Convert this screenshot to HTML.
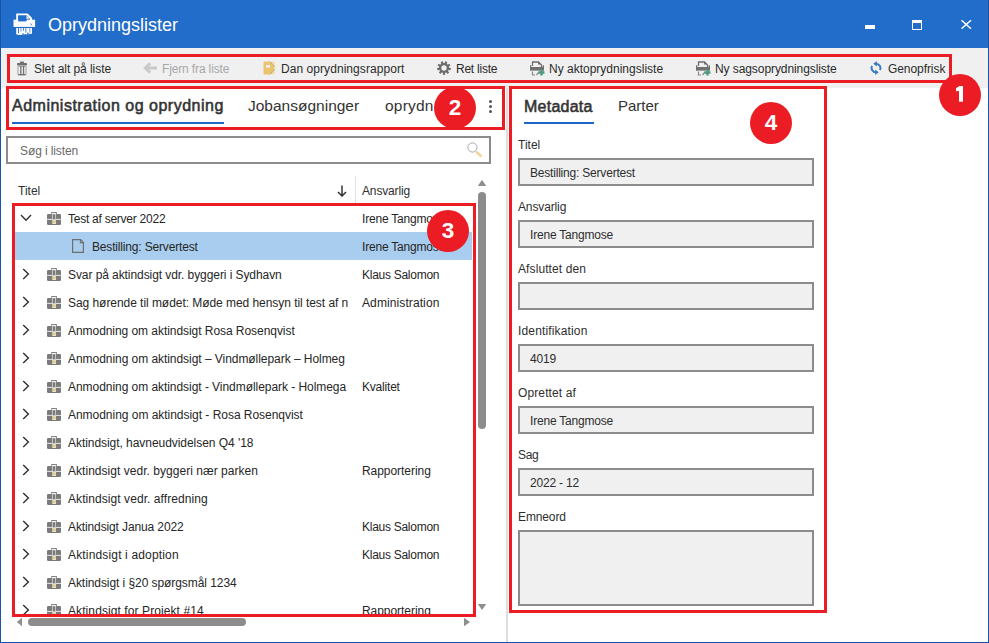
<!DOCTYPE html>
<html><head><meta charset="utf-8">
<style>
*{box-sizing:border-box;margin:0;padding:0}
html,body{width:989px;height:643px;overflow:hidden;background:#fff}
body{position:relative;font-family:"Liberation Sans",sans-serif;color:#2e2e2e}
.a{position:absolute}
.t{position:absolute;white-space:pre;line-height:1}
#title{left:0;top:0;width:989px;height:48px;background:#226dca}
#bl{left:0;top:0;width:1px;height:643px;background:#1753a6}
#br{left:988px;top:0;width:1px;height:643px;background:#1753a6}
#bb{left:0;top:642px;width:989px;height:1px;background:#1753a6}
#tb{left:1px;top:48px;width:987px;height:40px;background:#f0f0f0}
.tbt{font-size:12px;top:63px;color:#2b2b2b}
.red{position:absolute;border:3px solid #ec1c24}
.circ{position:absolute;width:42px;height:42px;border-radius:50%;background:#ec1c24;color:#fff;font-weight:bold;font-size:22.5px;text-align:center;line-height:42px}
.row{position:absolute;left:0;width:472px;height:28px}
.sel{background:linear-gradient(to right,#fff 0,#fff 13px,#a9cdee 13px)}
.rt{position:absolute;font-size:12px;letter-spacing:-0.1px;white-space:pre;line-height:16px;top:7px;color:#262626}
.lbl{position:absolute;left:518px;font-size:12px;letter-spacing:-0.1px;white-space:pre;line-height:1}
.inp{position:absolute;left:518px;width:296px;height:28px;background:#f0f0f0;border:2px solid #8c8c8c}
.inp span{position:absolute;left:10px;top:7px;font-size:12px;letter-spacing:-0.2px;white-space:pre;line-height:1}
</style></head><body>
<div id="title" class="a"></div>
<div class="t" style="left:48px;top:16px;font-size:18px;color:#fff">Oprydningslister</div>
<div id="tb" class="a"></div>

<!-- left panel -->
<div class="a" style="left:506px;top:88px;width:2px;height:554px;background:#dedede"></div>

<div class="t" style="left:12px;top:98px;font-size:16px;letter-spacing:0.5px;-webkit-text-stroke:0.55px #333;color:#333">Administration og oprydning</div>
<div class="a" style="left:12px;top:122px;width:212px;height:2px;background:#1e66c8"></div>
<div class="t" style="left:248px;top:98px;font-size:15.5px;color:#333">Jobansøgninger</div>
<div class="a" style="left:385px;top:94px;width:49px;height:24px;overflow:hidden"><div class="t" style="left:0;top:4px;font-size:15.5px;letter-spacing:0.2px;color:#333">oprydning</div></div>

<div class="a" style="left:6px;top:136px;width:485px;height:28px;border:2px solid #8c8c8c;background:#fff"></div>
<div class="t" style="left:20px;top:145px;font-size:12px;letter-spacing:-0.1px;color:#6a6a6a">Søg i listen</div>

<div class="t" style="left:18px;top:185px;font-size:12px">Titel</div>
<div class="a" style="left:355px;top:176px;width:1px;height:28px;background:#e2e2e2"></div>
<div class="t" style="left:362px;top:185px;font-size:12px;letter-spacing:-0.15px">Ansvarlig</div>

<div id="list" class="a" style="left:0;top:204px;width:476px;height:413px;overflow:hidden">
<div class="row" style="top:0px"><svg class="a" style="left:20px;top:10px" width="12" height="8" viewBox="0 0 12 8"><path d="M1,1 L6,6.2 L11,1" fill="none" stroke="#303030" stroke-width="1.4"/></svg><svg class="a" style="left:47px;top:8px" width="15" height="14" viewBox="0 0 15 14"><rect x="0" y="2" width="14" height="11" rx="1.2" fill="#7b7b7b"/><rect x="0" y="6.9" width="14" height="1.1" fill="#dcdcdc"/><rect x="4.7" y="0.5" width="4.7" height="2" fill="#f4f4f4" stroke="#858585" stroke-width="1"/><rect x="5.2" y="2" width="3.8" height="10" fill="#d6d6d6"/><rect x="6" y="2.3" width="2.2" height="5" fill="#7b7b7b"/><rect x="6" y="7.8" width="2.2" height="3.8" fill="#eef0f4"/><circle cx="7.1" cy="9.8" r="1.3" fill="#f2c252"/></svg><div class="rt" style="left:68px;width:283px;overflow:hidden;letter-spacing:-0.250px">Test af server 2022</div><div class="rt" style="left:362px;letter-spacing:-0.200px">Irene Tangmose</div></div>
<div class="row sel" style="top:28px"><svg class="a" style="left:72px;top:7px" width="13" height="15" viewBox="0 0 13 15"><path d="M0.6,0.6 H8.6 L11.4,3.4 V13.4 H0.6 Z" fill="none" stroke="#6e6e6e" stroke-width="1.2"/><path d="M8.4,0.6 V3.6 H11.4" fill="none" stroke="#6e6e6e" stroke-width="1.1"/></svg><div class="rt" style="left:92px;width:259px;overflow:hidden;letter-spacing:-0.170px">Bestilling: Servertest</div><div class="rt" style="left:362px;letter-spacing:-0.200px">Irene Tangmose</div></div>
<div class="row" style="top:56px"><svg class="a" style="left:22px;top:8px" width="8" height="12" viewBox="0 0 8 12"><path d="M1.2,1 L6.4,6 L1.2,11" fill="none" stroke="#303030" stroke-width="1.4"/></svg><svg class="a" style="left:47px;top:8px" width="15" height="14" viewBox="0 0 15 14"><rect x="0" y="2" width="14" height="11" rx="1.2" fill="#7b7b7b"/><rect x="0" y="6.9" width="14" height="1.1" fill="#dcdcdc"/><rect x="4.7" y="0.5" width="4.7" height="2" fill="#f4f4f4" stroke="#858585" stroke-width="1"/><rect x="5.2" y="2" width="3.8" height="10" fill="#d6d6d6"/><rect x="6" y="2.3" width="2.2" height="5" fill="#7b7b7b"/><rect x="6" y="7.8" width="2.2" height="3.8" fill="#eef0f4"/><circle cx="7.1" cy="9.8" r="1.3" fill="#f2c252"/></svg><div class="rt" style="left:68px;width:283px;overflow:hidden;letter-spacing:-0.076px">Svar på aktindsigt vdr. byggeri i Sydhavn</div><div class="rt" style="left:362px;letter-spacing:-0.270px">Klaus Salomon</div></div>
<div class="row" style="top:84px"><svg class="a" style="left:22px;top:8px" width="8" height="12" viewBox="0 0 8 12"><path d="M1.2,1 L6.4,6 L1.2,11" fill="none" stroke="#303030" stroke-width="1.4"/></svg><svg class="a" style="left:47px;top:8px" width="15" height="14" viewBox="0 0 15 14"><rect x="0" y="2" width="14" height="11" rx="1.2" fill="#7b7b7b"/><rect x="0" y="6.9" width="14" height="1.1" fill="#dcdcdc"/><rect x="4.7" y="0.5" width="4.7" height="2" fill="#f4f4f4" stroke="#858585" stroke-width="1"/><rect x="5.2" y="2" width="3.8" height="10" fill="#d6d6d6"/><rect x="6" y="2.3" width="2.2" height="5" fill="#7b7b7b"/><rect x="6" y="7.8" width="2.2" height="3.8" fill="#eef0f4"/><circle cx="7.1" cy="9.8" r="1.3" fill="#f2c252"/></svg><div class="rt" style="left:68px;width:283px;overflow:hidden;letter-spacing:-0.050px">Sag hørende til mødet: Møde med hensyn til test af n</div><div class="rt" style="left:362px;letter-spacing:0.100px">Administration</div></div>
<div class="row" style="top:112px"><svg class="a" style="left:22px;top:8px" width="8" height="12" viewBox="0 0 8 12"><path d="M1.2,1 L6.4,6 L1.2,11" fill="none" stroke="#303030" stroke-width="1.4"/></svg><svg class="a" style="left:47px;top:8px" width="15" height="14" viewBox="0 0 15 14"><rect x="0" y="2" width="14" height="11" rx="1.2" fill="#7b7b7b"/><rect x="0" y="6.9" width="14" height="1.1" fill="#dcdcdc"/><rect x="4.7" y="0.5" width="4.7" height="2" fill="#f4f4f4" stroke="#858585" stroke-width="1"/><rect x="5.2" y="2" width="3.8" height="10" fill="#d6d6d6"/><rect x="6" y="2.3" width="2.2" height="5" fill="#7b7b7b"/><rect x="6" y="7.8" width="2.2" height="3.8" fill="#eef0f4"/><circle cx="7.1" cy="9.8" r="1.3" fill="#f2c252"/></svg><div class="rt" style="left:68px;width:283px;overflow:hidden;letter-spacing:-0.054px">Anmodning om aktindsigt Rosa Rosenqvist</div></div>
<div class="row" style="top:140px"><svg class="a" style="left:22px;top:8px" width="8" height="12" viewBox="0 0 8 12"><path d="M1.2,1 L6.4,6 L1.2,11" fill="none" stroke="#303030" stroke-width="1.4"/></svg><svg class="a" style="left:47px;top:8px" width="15" height="14" viewBox="0 0 15 14"><rect x="0" y="2" width="14" height="11" rx="1.2" fill="#7b7b7b"/><rect x="0" y="6.9" width="14" height="1.1" fill="#dcdcdc"/><rect x="4.7" y="0.5" width="4.7" height="2" fill="#f4f4f4" stroke="#858585" stroke-width="1"/><rect x="5.2" y="2" width="3.8" height="10" fill="#d6d6d6"/><rect x="6" y="2.3" width="2.2" height="5" fill="#7b7b7b"/><rect x="6" y="7.8" width="2.2" height="3.8" fill="#eef0f4"/><circle cx="7.1" cy="9.8" r="1.3" fill="#f2c252"/></svg><div class="rt" style="left:68px;width:283px;overflow:hidden;letter-spacing:-0.050px">Anmodning om aktindsigt – Vindmøllepark – Holmeg</div></div>
<div class="row" style="top:168px"><svg class="a" style="left:22px;top:8px" width="8" height="12" viewBox="0 0 8 12"><path d="M1.2,1 L6.4,6 L1.2,11" fill="none" stroke="#303030" stroke-width="1.4"/></svg><svg class="a" style="left:47px;top:8px" width="15" height="14" viewBox="0 0 15 14"><rect x="0" y="2" width="14" height="11" rx="1.2" fill="#7b7b7b"/><rect x="0" y="6.9" width="14" height="1.1" fill="#dcdcdc"/><rect x="4.7" y="0.5" width="4.7" height="2" fill="#f4f4f4" stroke="#858585" stroke-width="1"/><rect x="5.2" y="2" width="3.8" height="10" fill="#d6d6d6"/><rect x="6" y="2.3" width="2.2" height="5" fill="#7b7b7b"/><rect x="6" y="7.8" width="2.2" height="3.8" fill="#eef0f4"/><circle cx="7.1" cy="9.8" r="1.3" fill="#f2c252"/></svg><div class="rt" style="left:68px;width:283px;overflow:hidden;letter-spacing:-0.050px">Anmodning om aktindsigt - Vindmøllepark - Holmega</div><div class="rt" style="left:362px;letter-spacing:-0.200px">Kvalitet</div></div>
<div class="row" style="top:196px"><svg class="a" style="left:22px;top:8px" width="8" height="12" viewBox="0 0 8 12"><path d="M1.2,1 L6.4,6 L1.2,11" fill="none" stroke="#303030" stroke-width="1.4"/></svg><svg class="a" style="left:47px;top:8px" width="15" height="14" viewBox="0 0 15 14"><rect x="0" y="2" width="14" height="11" rx="1.2" fill="#7b7b7b"/><rect x="0" y="6.9" width="14" height="1.1" fill="#dcdcdc"/><rect x="4.7" y="0.5" width="4.7" height="2" fill="#f4f4f4" stroke="#858585" stroke-width="1"/><rect x="5.2" y="2" width="3.8" height="10" fill="#d6d6d6"/><rect x="6" y="2.3" width="2.2" height="5" fill="#7b7b7b"/><rect x="6" y="7.8" width="2.2" height="3.8" fill="#eef0f4"/><circle cx="7.1" cy="9.8" r="1.3" fill="#f2c252"/></svg><div class="rt" style="left:68px;width:283px;overflow:hidden;letter-spacing:-0.030px">Anmodning om aktindsigt - Rosa Rosenqvist</div></div>
<div class="row" style="top:224px"><svg class="a" style="left:22px;top:8px" width="8" height="12" viewBox="0 0 8 12"><path d="M1.2,1 L6.4,6 L1.2,11" fill="none" stroke="#303030" stroke-width="1.4"/></svg><svg class="a" style="left:47px;top:8px" width="15" height="14" viewBox="0 0 15 14"><rect x="0" y="2" width="14" height="11" rx="1.2" fill="#7b7b7b"/><rect x="0" y="6.9" width="14" height="1.1" fill="#dcdcdc"/><rect x="4.7" y="0.5" width="4.7" height="2" fill="#f4f4f4" stroke="#858585" stroke-width="1"/><rect x="5.2" y="2" width="3.8" height="10" fill="#d6d6d6"/><rect x="6" y="2.3" width="2.2" height="5" fill="#7b7b7b"/><rect x="6" y="7.8" width="2.2" height="3.8" fill="#eef0f4"/><circle cx="7.1" cy="9.8" r="1.3" fill="#f2c252"/></svg><div class="rt" style="left:68px;width:283px;overflow:hidden;letter-spacing:-0.050px">Aktindsigt, havneudvidelsen Q4 '18</div></div>
<div class="row" style="top:252px"><svg class="a" style="left:22px;top:8px" width="8" height="12" viewBox="0 0 8 12"><path d="M1.2,1 L6.4,6 L1.2,11" fill="none" stroke="#303030" stroke-width="1.4"/></svg><svg class="a" style="left:47px;top:8px" width="15" height="14" viewBox="0 0 15 14"><rect x="0" y="2" width="14" height="11" rx="1.2" fill="#7b7b7b"/><rect x="0" y="6.9" width="14" height="1.1" fill="#dcdcdc"/><rect x="4.7" y="0.5" width="4.7" height="2" fill="#f4f4f4" stroke="#858585" stroke-width="1"/><rect x="5.2" y="2" width="3.8" height="10" fill="#d6d6d6"/><rect x="6" y="2.3" width="2.2" height="5" fill="#7b7b7b"/><rect x="6" y="7.8" width="2.2" height="3.8" fill="#eef0f4"/><circle cx="7.1" cy="9.8" r="1.3" fill="#f2c252"/></svg><div class="rt" style="left:68px;width:283px;overflow:hidden;letter-spacing:0.034px">Aktindsigt vedr. byggeri nær parken</div><div class="rt" style="left:362px;letter-spacing:-0.050px">Rapportering</div></div>
<div class="row" style="top:280px"><svg class="a" style="left:22px;top:8px" width="8" height="12" viewBox="0 0 8 12"><path d="M1.2,1 L6.4,6 L1.2,11" fill="none" stroke="#303030" stroke-width="1.4"/></svg><svg class="a" style="left:47px;top:8px" width="15" height="14" viewBox="0 0 15 14"><rect x="0" y="2" width="14" height="11" rx="1.2" fill="#7b7b7b"/><rect x="0" y="6.9" width="14" height="1.1" fill="#dcdcdc"/><rect x="4.7" y="0.5" width="4.7" height="2" fill="#f4f4f4" stroke="#858585" stroke-width="1"/><rect x="5.2" y="2" width="3.8" height="10" fill="#d6d6d6"/><rect x="6" y="2.3" width="2.2" height="5" fill="#7b7b7b"/><rect x="6" y="7.8" width="2.2" height="3.8" fill="#eef0f4"/><circle cx="7.1" cy="9.8" r="1.3" fill="#f2c252"/></svg><div class="rt" style="left:68px;width:283px;overflow:hidden;letter-spacing:0.067px">Aktindsigt vedr. affredning</div></div>
<div class="row" style="top:308px"><svg class="a" style="left:22px;top:8px" width="8" height="12" viewBox="0 0 8 12"><path d="M1.2,1 L6.4,6 L1.2,11" fill="none" stroke="#303030" stroke-width="1.4"/></svg><svg class="a" style="left:47px;top:8px" width="15" height="14" viewBox="0 0 15 14"><rect x="0" y="2" width="14" height="11" rx="1.2" fill="#7b7b7b"/><rect x="0" y="6.9" width="14" height="1.1" fill="#dcdcdc"/><rect x="4.7" y="0.5" width="4.7" height="2" fill="#f4f4f4" stroke="#858585" stroke-width="1"/><rect x="5.2" y="2" width="3.8" height="10" fill="#d6d6d6"/><rect x="6" y="2.3" width="2.2" height="5" fill="#7b7b7b"/><rect x="6" y="7.8" width="2.2" height="3.8" fill="#eef0f4"/><circle cx="7.1" cy="9.8" r="1.3" fill="#f2c252"/></svg><div class="rt" style="left:68px;width:283px;overflow:hidden;letter-spacing:-0.120px">Aktindsigt Janua 2022</div><div class="rt" style="left:362px;letter-spacing:-0.270px">Klaus Salomon</div></div>
<div class="row" style="top:336px"><svg class="a" style="left:22px;top:8px" width="8" height="12" viewBox="0 0 8 12"><path d="M1.2,1 L6.4,6 L1.2,11" fill="none" stroke="#303030" stroke-width="1.4"/></svg><svg class="a" style="left:47px;top:8px" width="15" height="14" viewBox="0 0 15 14"><rect x="0" y="2" width="14" height="11" rx="1.2" fill="#7b7b7b"/><rect x="0" y="6.9" width="14" height="1.1" fill="#dcdcdc"/><rect x="4.7" y="0.5" width="4.7" height="2" fill="#f4f4f4" stroke="#858585" stroke-width="1"/><rect x="5.2" y="2" width="3.8" height="10" fill="#d6d6d6"/><rect x="6" y="2.3" width="2.2" height="5" fill="#7b7b7b"/><rect x="6" y="7.8" width="2.2" height="3.8" fill="#eef0f4"/><circle cx="7.1" cy="9.8" r="1.3" fill="#f2c252"/></svg><div class="rt" style="left:68px;width:283px;overflow:hidden;letter-spacing:0.160px">Aktindsigt i adoption</div><div class="rt" style="left:362px;letter-spacing:-0.270px">Klaus Salomon</div></div>
<div class="row" style="top:364px"><svg class="a" style="left:22px;top:8px" width="8" height="12" viewBox="0 0 8 12"><path d="M1.2,1 L6.4,6 L1.2,11" fill="none" stroke="#303030" stroke-width="1.4"/></svg><svg class="a" style="left:47px;top:8px" width="15" height="14" viewBox="0 0 15 14"><rect x="0" y="2" width="14" height="11" rx="1.2" fill="#7b7b7b"/><rect x="0" y="6.9" width="14" height="1.1" fill="#dcdcdc"/><rect x="4.7" y="0.5" width="4.7" height="2" fill="#f4f4f4" stroke="#858585" stroke-width="1"/><rect x="5.2" y="2" width="3.8" height="10" fill="#d6d6d6"/><rect x="6" y="2.3" width="2.2" height="5" fill="#7b7b7b"/><rect x="6" y="7.8" width="2.2" height="3.8" fill="#eef0f4"/><circle cx="7.1" cy="9.8" r="1.3" fill="#f2c252"/></svg><div class="rt" style="left:68px;width:283px;overflow:hidden;letter-spacing:-0.070px">Aktindsigt i §20 spørgsmål 1234</div></div>
<div class="row" style="top:392px"><svg class="a" style="left:22px;top:8px" width="8" height="12" viewBox="0 0 8 12"><path d="M1.2,1 L6.4,6 L1.2,11" fill="none" stroke="#303030" stroke-width="1.4"/></svg><svg class="a" style="left:47px;top:8px" width="15" height="14" viewBox="0 0 15 14"><rect x="0" y="2" width="14" height="11" rx="1.2" fill="#7b7b7b"/><rect x="0" y="6.9" width="14" height="1.1" fill="#dcdcdc"/><rect x="4.7" y="0.5" width="4.7" height="2" fill="#f4f4f4" stroke="#858585" stroke-width="1"/><rect x="5.2" y="2" width="3.8" height="10" fill="#d6d6d6"/><rect x="6" y="2.3" width="2.2" height="5" fill="#7b7b7b"/><rect x="6" y="7.8" width="2.2" height="3.8" fill="#eef0f4"/><circle cx="7.1" cy="9.8" r="1.3" fill="#f2c252"/></svg><div class="rt" style="left:68px;width:283px;overflow:hidden;letter-spacing:0.090px">Aktindsigt for Projekt #14</div><div class="rt" style="left:362px;letter-spacing:-0.050px">Rapportering</div></div>
</div>

<!-- right panel -->
<div class="t" style="left:524px;top:98.5px;font-size:16px;letter-spacing:0.25px;-webkit-text-stroke:0.55px #333;color:#333">Metadata</div>
<div class="a" style="left:524px;top:122px;width:70px;height:2px;background:#1e66c8"></div>
<div class="t" style="left:618px;top:98px;font-size:15px;color:#333">Parter</div>

<div class="lbl" style="top:139px;letter-spacing:0">Titel</div>
<div class="inp" style="top:158px"><span>Bestilling: Servertest</span></div>
<div class="lbl" style="top:201px;letter-spacing:-0.13px">Ansvarlig</div>
<div class="inp" style="top:220px"><span>Irene Tangmose</span></div>
<div class="lbl" style="top:263px;letter-spacing:0.1px">Afsluttet den</div>
<div class="inp" style="top:282px"></div>
<div class="lbl" style="top:325px;letter-spacing:0.15px">Identifikation</div>
<div class="inp" style="top:344px"><span>4019</span></div>
<div class="lbl" style="top:387px;letter-spacing:0.12px">Oprettet af</div>
<div class="inp" style="top:406px"><span>Irene Tangmose</span></div>
<div class="lbl" style="top:449px;letter-spacing:-0.3px">Sag</div>
<div class="inp" style="top:468px"><span>2022 - 12</span></div>
<div class="lbl" style="top:511px;letter-spacing:-0.12px">Emneord</div>
<div class="inp" style="top:530px;height:76px"></div>


<!-- title icon -->
<svg class="a" style="left:13px;top:13px" width="23" height="23" viewBox="0 0 23 23">
<rect x="0.5" y="6.7" width="21.6" height="7.2" fill="#fff"/>
<path d="M4.2,8.5 V1.5 H14.2 L17.9,5.2 V8" fill="none" stroke="#fff" stroke-width="2"/>
<rect x="5.2" y="2.5" width="8.3" height="5.9" fill="#226dca"/>
<path d="M13.5,2.6 V5.8 H16.4 Z" fill="#fff"/>
<path d="M17.6,10.6 q0.8,1.4 1.6,0 M17.6,12.2 q0.8,-1.2 1.6,0" fill="none" stroke="#226dca" stroke-width="0.8"/>
<rect x="3.2" y="15" width="15.8" height="6.9" fill="#fff"/><g fill="#226dca"><rect x="5.1" y="15" width="0.9" height="5.3"/><rect x="7.6" y="15" width="0.7" height="3.5"/><rect x="10" y="15" width="0.8" height="2.8"/><rect x="12.5" y="15" width="0.8" height="4.7"/><rect x="16.2" y="15" width="1.2" height="4.5" fill="#7fa8e0"/><rect x="9.3" y="20.4" width="1.4" height="1.6"/><rect x="14.2" y="19.6" width="1.3" height="2.4"/><rect x="3.2" y="21.2" width="1.2" height="0.8"/><rect x="11" y="21.3" width="3.2" height="0.7"/><rect x="15.5" y="20.8" width="3.5" height="1.2"/></g>
</svg>
<!-- window controls -->
<div class="a" style="left:865px;top:25px;width:10px;height:4px;background:#fff"></div>
<div class="a" style="left:912px;top:20px;width:10px;height:9.5px;border:1.3px solid #fff;border-top-width:3px"></div>
<svg class="a" style="left:961px;top:20px" width="11" height="9" viewBox="0 0 11 9"><path d="M0.5,0.3 L10,8.7 M10,0.3 L0.5,8.7" stroke="#fff" stroke-width="1.5"/></svg>

<!-- toolbar items -->
<svg class="a" style="left:16px;top:61px" width="12" height="15" viewBox="0 0 12 15">
<rect x="4" y="0.5" width="4" height="2" fill="#777"/><rect x="1" y="2" width="10" height="2.5" rx="0.8" fill="#6f6f6f"/>
<path d="M2,5.5 H10 V13 Q10,14 9,14 H3 Q2,14 2,13 Z" fill="none" stroke="#b0b0b0" stroke-width="1.2"/>
<rect x="4.2" y="5" width="1.3" height="9" fill="#707070"/><rect x="6.9" y="5" width="1.3" height="9" fill="#707070"/><rect x="2.5" y="13" width="7" height="1.2" fill="#707070"/>
</svg>
<div class="t tbt" style="left:34px;letter-spacing:-0.06px">Slet alt på liste</div>
<svg class="a" style="left:142px;top:62px" width="16" height="12" viewBox="0 0 16 12"><path d="M15,6 H4 M8.2,1.3 L3.3,6 L8.2,10.7" fill="none" stroke="#c9c9c9" stroke-width="3"/></svg>
<div class="t tbt" style="left:162px;color:#a8a8a8;letter-spacing:-0.14px">Fjern fra liste</div>
<svg class="a" style="left:263px;top:61px" width="13" height="14" viewBox="0 0 13 14"><path d="M7.5,0.5 H11 Q11.8,0.5 11.8,1.3 V12.7 Q11.8,13.5 11,13.5 H7.5 Z" fill="#f3dfae"/><path d="M0.5,1.5 Q0.5,0.5 1.5,0.5 H6.8 L11.3,5 V9 L6.8,13.5 H1.5 Q0.5,13.5 0.5,12.5 Z" fill="#ebc46e"/><rect x="3" y="4" width="4" height="2.6" fill="#f4f4f4"/><path d="M7,0.7 L11.6,5.2 M7,13.3 L11.6,8.8" stroke="#8a8a8a" stroke-width="1" stroke-dasharray="1,0.8"/></svg>
<div class="t tbt" style="left:281px;letter-spacing:0.06px">Dan oprydningsrapport</div>
<svg class="a" style="left:437px;top:61px" width="14" height="14" viewBox="0 0 14 14"><g fill="#6b6b6b"><circle cx="7" cy="7" r="5"/><rect x="5.9" y="0.2" width="2.2" height="3" transform="rotate(20 7 7)"/><rect x="5.9" y="0.2" width="2.2" height="3" transform="rotate(60 7 7)"/><rect x="5.9" y="0.2" width="2.2" height="3" transform="rotate(100 7 7)"/><rect x="5.9" y="0.2" width="2.2" height="3" transform="rotate(140 7 7)"/><rect x="5.9" y="0.2" width="2.2" height="3" transform="rotate(180 7 7)"/><rect x="5.9" y="0.2" width="2.2" height="3" transform="rotate(220 7 7)"/><rect x="5.9" y="0.2" width="2.2" height="3" transform="rotate(260 7 7)"/><rect x="5.9" y="0.2" width="2.2" height="3" transform="rotate(300 7 7)"/><rect x="5.9" y="0.2" width="2.2" height="3" transform="rotate(340 7 7)"/></g><circle cx="7" cy="7" r="2.7" fill="#f0f0f0"/></svg>
<div class="t tbt" style="left:456px;letter-spacing:-0.24px">Ret liste</div>
<svg class="a" style="left:530px;top:61px" width="16" height="15" viewBox="0 0 16 15" id="shadd">
<path d="M2.5,5 V1 H8.5 L11.5,4 V6" fill="none" stroke="#6e6e6e" stroke-width="1.3"/><rect x="8" y="1.5" width="2" height="2" fill="#6e6e6e"/>
<rect x="0" y="6" width="14" height="3.6" fill="#707070"/><rect x="0" y="4.3" width="1.3" height="5" fill="#707070"/><rect x="12.7" y="4.3" width="1.3" height="5" fill="#707070"/>
<path d="M2.5,10.5 V14 H5 M6.5,14 L9,11" fill="none" stroke="#8a8a8a" stroke-width="1.2"/>
<path d="M11.5,8.5 V14.5 M8.5,11.5 H14.5" stroke="#4f9b7d" stroke-width="2.4"/>
</svg>
<div class="t tbt" style="left:549px">Ny aktoprydningsliste</div>
<svg class="a" style="left:696px;top:61px" width="16" height="15" viewBox="0 0 16 15">
<path d="M2.5,5 V1 H8.5 L11.5,4 V6" fill="none" stroke="#6e6e6e" stroke-width="1.3"/><rect x="8" y="1.5" width="2" height="2" fill="#6e6e6e"/>
<rect x="0" y="6" width="14" height="3.6" fill="#707070"/><rect x="0" y="4.3" width="1.3" height="5" fill="#707070"/><rect x="12.7" y="4.3" width="1.3" height="5" fill="#707070"/>
<path d="M2.5,10.5 V14 H5 M6.5,14 L9,11" fill="none" stroke="#8a8a8a" stroke-width="1.2"/>
<path d="M11.5,8.5 V14.5 M8.5,11.5 H14.5" stroke="#4f9b7d" stroke-width="2.4"/>
</svg>
<div class="t tbt" style="left:715px;letter-spacing:-0.08px">Ny sagsoprydningsliste</div>
<svg class="a" style="left:870px;top:61px" width="12" height="14" viewBox="0 0 12 14"><g fill="none" stroke="#3b78c2" stroke-width="2"><path d="M6,2.7 A4.3,4.3 0 0 1 9.9,9"/><path d="M6,11.3 A4.3,4.3 0 0 1 2.1,5"/></g><path d="M3.3,2.7 L6.8,0 L6.8,5.4 Z" fill="#3b78c2"/><path d="M8.7,11.3 L5.2,8.6 L5.2,14 Z" fill="#3b78c2"/></svg>
<div class="t tbt" style="left:888px;letter-spacing:-0.07px">Genopfrisk</div>

<!-- kebab -->
<div class="a" style="left:488.5px;top:99.5px;width:3px;height:3px;border-radius:50%;background:#555"></div>
<div class="a" style="left:488.5px;top:104.5px;width:3px;height:3px;border-radius:50%;background:#555"></div>
<div class="a" style="left:488.5px;top:109.5px;width:3px;height:3px;border-radius:50%;background:#555"></div>

<!-- magnifier -->
<svg class="a" style="left:466px;top:141px" width="17" height="17" viewBox="0 0 17 17"><circle cx="6.5" cy="6.5" r="4.6" fill="none" stroke="#a8a8a8" stroke-width="1"/><path d="M11,11.5 L14.6,14.8" stroke="#f1d696" stroke-width="2.6" stroke-linecap="round"/></svg>

<!-- sort arrow -->
<svg class="a" style="left:337px;top:185px" width="10" height="12" viewBox="0 0 10 12"><path d="M5,0.5 V11 M1,7 L5,11 L9,7" fill="none" stroke="#333" stroke-width="1.5"/></svg>

<!-- v scrollbar -->
<svg class="a" style="left:477px;top:179px" width="10" height="8" viewBox="0 0 10 8"><path d="M0.8,7 L5,0.8 L9.2,7 Z" fill="#8e8e8e"/></svg>
<div class="a" style="left:478px;top:192px;width:8px;height:237px;border-radius:4px;background:#8c8c8c"></div>
<svg class="a" style="left:477px;top:603px" width="10" height="8" viewBox="0 0 10 8"><path d="M0.8,1 L5,7 L9.2,1 Z" fill="#8e8e8e"/></svg>
<!-- h scrollbar -->
<svg class="a" style="left:16px;top:617px" width="7" height="10" viewBox="0 0 7 10"><path d="M6,0.8 L0.8,5 L6,9.2 Z" fill="#8e8e8e"/></svg>
<div class="a" style="left:28px;top:618px;width:218px;height:8px;border-radius:4px;background:#8c8c8c"></div>
<svg class="a" style="left:463px;top:617px" width="8" height="10" viewBox="0 0 8 10"><path d="M1,0.8 L7,5 L1,9.2 Z" fill="#8e8e8e"/></svg>

<!-- annotations -->
<div class="red" style="left:7px;top:54px;width:945px;height:29px"></div>
<div class="red" style="left:6px;top:86px;width:499px;height:44px"></div>
<div class="red" style="left:12px;top:203px;width:464px;height:414px"></div>
<div class="red" style="left:509px;top:86px;width:318px;height:527px"></div>
<div class="circ" style="left:939px;top:74px"><svg class="a" style="left:0;top:0" width="42" height="42" viewBox="0 0 42 42"><path d="M20,12.1 H24 V27.8 H20 V16.9 L17,17.3 V14 Q19,13.4 20.3,12.1 Z" fill="#fff"/></svg></div>
<div class="circ" style="left:434px;top:87px">2</div>
<div class="circ" style="left:427px;top:210px">3</div>
<div class="circ" style="left:750px;top:102px">4</div>

<div id="bl" class="a"></div><div id="br" class="a"></div><div id="bb" class="a"></div>
</body></html>
